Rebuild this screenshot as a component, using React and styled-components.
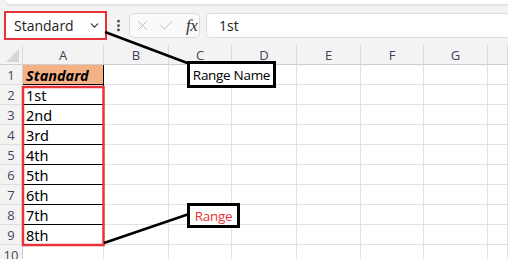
import React from 'react';
import styled, { createGlobalStyle } from 'styled-components';
import { ChevronDown, EllipsisVertical, X, Check } from 'lucide-react';

const GlobalStyle = createGlobalStyle`
  html, body {
    margin: 0;
    padding: 0;
    background: #f3f3f3;
  }
  * { box-sizing: border-box; }
`;

const uiFont = `"Open Sans", "Noto Sans", "Liberation Sans", sans-serif`;
const cellFont = `"Noto Sans", "Liberation Sans", sans-serif`;

// --- Layout ---

const Page = styled.div`
  position: relative;
  width: 508px;
  height: 259px;
  overflow: hidden;
  background: #f3f3f3;
  font-family: ${uiFont};
`;

const RibbonEdge = styled.div`
  height: 4px;
  margin-left: 6px;
  background: #ffffff;
  border-bottom-left-radius: 6px;
  box-shadow: 0 1px 3px rgba(0, 0, 0, 0.12);
`;

const FormulaBar = styled.div`
  display: flex;
  align-items: flex-start;
  height: 41px;
  padding: 7px 0 0 4px;
`;

const NameBox = styled.div`
  display: flex;
  align-items: center;
  justify-content: space-between;
  width: 103px;
  height: 29px;
  padding: 0 4px 0 8px;
  background: #ffffff;
  border: 2px solid #e8323a;
  font-size: 14px;
  color: #222;
`;

const Dots = styled.div`
  display: flex;
  align-items: center;
  justify-content: center;
  width: 22px;
  height: 29px;
  color: #444;
`;

const FuncBox = styled.div`
  display: flex;
  align-items: center;
  gap: 7px;
  width: 71px;
  height: 25px;
  margin-top: 2px;
  padding: 0 0 0 4px;
  background: #fafafa;
  border: 1px solid #dcdcdc;
  border-radius: 5px;
  color: #b5b5b5;
`;

const Fx = styled.span`
  margin-left: 4px;
  font-family: "Liberation Serif", "DejaVu Serif", serif;
  font-style: italic;
  font-size: 17px;
  color: #333;
  letter-spacing: -0.5px;
`;

const FormulaInput = styled.div`
  flex: 1;
  display: flex;
  align-items: center;
  height: 25px;
  margin: 2px 0 0 6px;
  padding-left: 12px;
  background: #ffffff;
  border: 1px solid #dcdcdc;
  border-right: none;
  border-radius: 5px 0 0 5px;
  font-size: 14px;
  color: #222;
`;

const Sheet = styled.div`
  display: grid;
  grid-template-columns: 23px 81px 65px 63px 65px 64px 63px 64px 1fr;
  grid-auto-rows: 20px;
  background: #ffffff;
`;

const ColHeader = styled.div`
  position: relative;
  display: flex;
  align-items: center;
  justify-content: center;
  background: #f3f3f3;
  border-right: 1px solid #d9d9d9;
  border-bottom: 1px solid #cfcfcf;
  font-size: 13px;
  color: #3f3f5a;
`;

const Corner = styled(ColHeader)`
  &::after {
    content: '';
    position: absolute;
    right: 3px;
    bottom: 2px;
    border-style: solid;
    border-width: 0 0 13px 13px;
    border-color: transparent transparent #d6d6d6 transparent;
  }
`;

const RowHeader = styled.div`
  display: flex;
  align-items: center;
  justify-content: center;
  background: #f3f3f3;
  border-right: 1px solid #cfcfcf;
  border-bottom: 1px solid #dedede;
  font-size: 13px;
  color: #454560;
`;

const Cell = styled.div`
  display: flex;
  align-items: center;
  padding-left: 3px;
  background: ${p => (p.$fill ? p.$fill : '#ffffff')};
  border-right: 1px solid ${p => (p.$boxed ? '#000' : '#e1e1e1')};
  border-bottom: 1px solid ${p => (p.$boxed ? '#000' : '#e1e1e1')};
  font-family: ${cellFont};
  font-size: 14.5px;
  font-weight: ${p => (p.$bold ? 700 : 400)};
  font-style: ${p => (p.$italic ? 'italic' : 'normal')};
  color: #000;
  white-space: nowrap;
`;

// --- Annotations (drawn over the sheet) ---

const Overlay = styled.svg`
  position: absolute;
  left: 0;
  top: 0;
  pointer-events: none;
`;

const Callout = styled.div`
  position: absolute;
  display: flex;
  align-items: center;
  justify-content: center;
  background: #ffffff;
  border: 3px solid #000;
  font-family: ${uiFont};
  font-size: 13.5px;
  letter-spacing: -0.3px;
  white-space: nowrap;
  color: ${p => p.$color || '#000'};
`;

const columns = ['A', 'B', 'C', 'D', 'E', 'F', 'G', ''];
const values = ['1st', '2nd', '3rd', '4th', '5th', '6th', '7th', '8th'];

export default function App() {
  const rows = [];
  for (let r = 1; r <= 10; r++) {
    rows.push(<RowHeader key={`h${r}`}>{r}</RowHeader>);
    columns.forEach((c, i) => {
      if (i === 0 && r === 1) {
        rows.push(
          <Cell key={`${r}${i}`} $fill="#f4b183" $bold $italic $boxed>
            Standard
          </Cell>
        );
      } else if (i === 0 && r <= 9) {
        rows.push(
          <Cell key={`${r}${i}`} $boxed>
            {values[r - 2]}
          </Cell>
        );
      } else {
        rows.push(<Cell key={`${r}${i}`} />);
      }
    });
  }

  return (
    <Page>
      <GlobalStyle />
      <RibbonEdge />
      <FormulaBar>
        <NameBox>
          <span>Standard</span>
          <ChevronDown size={13} strokeWidth={2.2} color="#333" />
        </NameBox>
        <Dots>
          <EllipsisVertical size={15} strokeWidth={2.4} />
        </Dots>
        <FuncBox>
          <X size={17} strokeWidth={1.2} />
          <Check size={17} strokeWidth={1.2} />
          <Fx>fx</Fx>
        </FuncBox>
        <FormulaInput>1st</FormulaInput>
      </FormulaBar>
      <Sheet>
        <Corner />
        {columns.map((c, i) => (
          <ColHeader key={`c${i}`}>{c}</ColHeader>
        ))}
        {rows}
      </Sheet>

      <Overlay width="508" height="259" viewBox="0 0 508 259">
        <rect x="23" y="87" width="80.5" height="158" fill="none" stroke="#e8323a" strokeWidth="2.5" />
        <line x1="105" y1="32" x2="190" y2="64" stroke="#000" strokeWidth="2.5" />
        <line x1="104" y1="243" x2="189" y2="214" stroke="#000" strokeWidth="2.5" />
      </Overlay>
      <Callout style={{ left: 187, top: 61, width: 89, height: 27 }}>Range Name</Callout>
      <Callout $color="#e8323a" style={{ left: 187, top: 203, width: 53, height: 25 }}>Range</Callout>
    </Page>
  );
}
